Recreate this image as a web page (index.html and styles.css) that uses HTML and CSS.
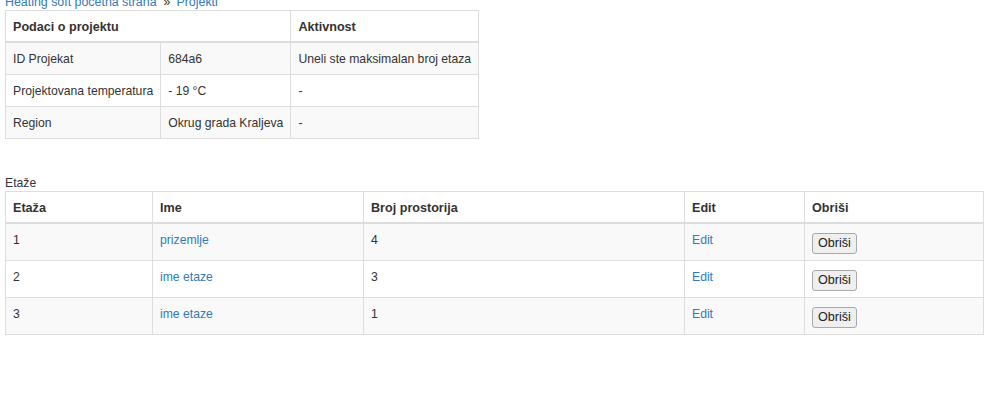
FILE: index.html
```html
<!DOCTYPE html>
<html lang="sr">
<head>
<meta charset="utf-8">
<title>Projekat</title>
<link rel="stylesheet" href="styles.css">
</head>
<body>
<div class="page">
  <div class="breadcrumb"><a href="#">Heating soft pocetna strana</a><span class="sep">»</span><a href="#">Projekti</a></div>
  <table class="tbl info">
    <thead>
      <tr><th colspan="2">Podaci o projektu</th><th>Aktivnost</th></tr>
    </thead>
    <tbody>
      <tr><td>ID Projekat</td><td>684a6</td><td>Uneli ste maksimalan broj etaza</td></tr>
      <tr><td>Projektovana temperatura</td><td>- 19 °C</td><td>-</td></tr>
      <tr><td>Region</td><td>Okrug grada Kraljeva</td><td>-</td></tr>
    </tbody>
  </table>
  <div class="caption">Etaže</div>
  <table class="tbl floors">
    <thead>
      <tr><th class="c1">Etaža</th><th class="c2">Ime</th><th class="c3">Broj prostorija</th><th class="c4">Edit</th><th class="c5">Obriši</th></tr>
    </thead>
    <tbody>
      <tr><td>1</td><td><a href="#">prizemlje</a></td><td>4</td><td><a href="#">Edit</a></td><td><button class="btn">Obriši</button></td></tr>
      <tr><td>2</td><td><a href="#">ime etaze</a></td><td>3</td><td><a href="#">Edit</a></td><td><button class="btn">Obriši</button></td></tr>
      <tr><td>3</td><td><a href="#">ime etaze</a></td><td>1</td><td><a href="#">Edit</a></td><td><button class="btn">Obriši</button></td></tr>
    </tbody>
  </table>
</div>
</body>
</html>
```
FILE: styles.css
```css
html, body {
  margin: 0;
  padding: 0;
  background: #fff;
}
body {
  font-family: "Liberation Sans", Arial, sans-serif;
  font-size: 12.2px;
  color: #333;
}
a {
  color: #337ab7;
  text-decoration: none;
}
.page {
  padding: 0 5px;
}
.breadcrumb {
  margin-top: -6px;
  height: 16px;
  line-height: 16px;
  font-size: 12.4px;
}
.breadcrumb .sep {
  margin: 0 6px 0 7px;
  color: #333;
}
.tbl {
  border-collapse: collapse;
  border: 1px solid #ddd;
}
.tbl th, .tbl td {
  border: 1px solid #ddd;
  padding: 9px 7px 7px;
  line-height: 15px;
  text-align: left;
  vertical-align: top;
}
.tbl th {
  font-weight: bold;
  font-size: 12.6px;
  border-bottom: 2px solid #ddd;
  padding: 9px 7px 6px;
}
.tbl tbody tr:nth-child(odd) {
  background: #f9f9f9;
}
.info {
  margin-bottom: 36px;
}
.info td {
  height: 15px;
}
.caption {
  line-height: 16px;
  height: 16px;
  padding-top: 1px;
  margin-top: -1px;
}
.floors {
  width: 979px;
  table-layout: fixed;
}
.floors .c1 { width: 132px; }
.floors .c2 { width: 196px; }
.floors .c3 { width: 306px; }
.floors .c4 { width: 105px; }
.floors .c5 { width: auto; }
.floors td {
  padding-bottom: 6px;
}
.btn {
  font-family: "Liberation Sans", Arial, sans-serif;
  font-size: 12.6px;
  color: #222;
  background: #efefef;
  border: 1px solid #a9a9a9;
  border-radius: 3px;
  padding: 2px 5px;
  margin: 0;
  line-height: 15px;
}
```
